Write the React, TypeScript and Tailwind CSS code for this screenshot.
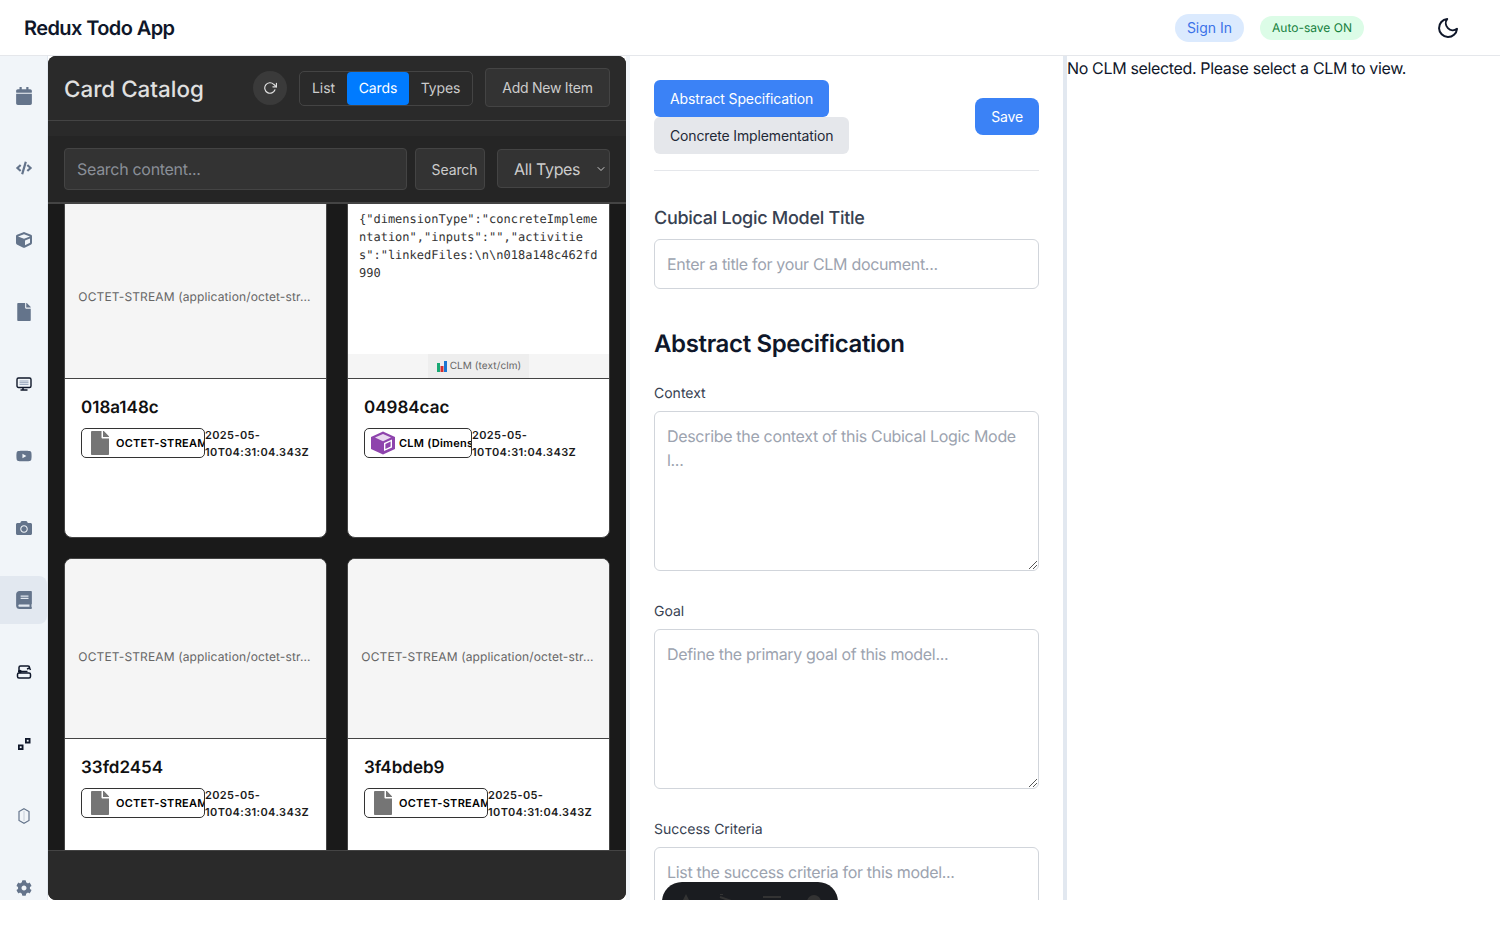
import React from "react";
import { FaCalendar, FaCode, FaCube, FaFile, FaCamera, FaBook, FaCog, FaYoutube } from "react-icons/fa";
import { FiMoon, FiRotateCw } from "react-icons/fi";
import { LuChevronDown } from "react-icons/lu";

const navIconClass = "text-[#64748b]";

function Monitor() {
  return (
    <svg width="16" height="16" viewBox="0 0 16 16">
      <rect x="1" y="2" width="14" height="9.5" rx="1.5" fill="none" stroke="#0f172a" strokeWidth="1.4" />
      <path d="M3.5 5h9M3.5 6.7h9M3.5 8.4h9" stroke="#94a3b8" strokeWidth="1" />
      <path d="M7 12v1.5M4.5 14h7" stroke="#0f172a" strokeWidth="1.5" />
    </svg>
  );
}
function Sync() {
  return (
    <svg width="16" height="16" viewBox="0 0 16 16" fill="none" stroke="#0f172a" strokeWidth="1.5">
      <path d="M3 7V3.5A1.5 1.5 0 0 1 4.5 2h7.5a1.5 1.5 0 0 1 1.5 1.5V4" />
      <path d="M2 7.5h9.5M11 5l2.5-1 1 2" />
      <rect x="1.5" y="9" width="13" height="5" rx="1.5" />
      <circle cx="4" cy="7.5" r="1" fill="#0f172a" />
    </svg>
  );
}
function Scatter() {
  return (
    <svg width="16" height="16" viewBox="0 0 16 16">
      <rect x="2" y="8.5" width="5.5" height="5.5" fill="#0f172a" />
      <rect x="3.8" y="10.3" width="1.8" height="1.8" fill="#f1f5f9" />
      <rect x="9" y="2" width="5.5" height="5.5" fill="#0f172a" />
      <rect x="10.8" y="3.8" width="1.8" height="1.8" fill="#f1f5f9" />
    </svg>
  );
}
function Hex() {
  return (
    <svg width="16" height="16" viewBox="0 0 16 16" fill="none" stroke="#64748b" strokeWidth="1.2">
      <path d="M8 .8 13 3.6v8.8L8 15.2 3 12.4V3.6z" />
      <path d="M8 3v10" strokeOpacity="0.25" />
    </svg>
  );
}

const nav: { icon: React.ReactNode; active?: boolean }[] = [
  { icon: <FaCalendar size={18} className={navIconClass} /> },
  { icon: <FaCode size={16} className={navIconClass} /> },
  { icon: <FaCube size={16} className={navIconClass} /> },
  { icon: <FaFile size={18} className={navIconClass} /> },
  { icon: <Monitor /> },
  { icon: <FaYoutube size={16} className={navIconClass} /> },
  { icon: <FaCamera size={16} className={navIconClass} /> },
  { icon: <FaBook size={18} className={navIconClass} />, active: true },
  { icon: <Sync /> },
  { icon: <Scatter /> },
  { icon: <Hex /> },
  { icon: <FaCog size={16} className={navIconClass} /> },
];

function PurpleCube() {
  return (
    <svg width="26" height="24" viewBox="0 0 26 24" className="shrink-0">
      <path d="M13 0.5 25 6v12l-12 5.5L1 18V6z" fill="#8e44ad" />
      <path d="M5 6.6 13 3l8 3.6-8 3.6z" fill="#e9d8f0" />
      <path d="M14 12v8l8-3.6V8.4z" fill="#fff" />
      <path d="M15.4 12.9v5l5.2-2.3v-5z" fill="#8e44ad" />
    </svg>
  );
}

function Chip({ icon, label, width, date, gap }: { icon: React.ReactNode; label: string; width: string; date: string; gap: string }) {
  return (
    <div className="flex items-start">
      <div className={`${width} ${gap} h-[30px] shrink-0 flex items-center pl-[5px] border border-[#333] rounded-[5px] overflow-hidden bg-white`}>
        {icon}
        <span className="text-[11px] pt-[1px] font-semibold tracking-[0.25px] text-black whitespace-nowrap">{label}</span>
      </div>
      <div className="text-[11px] font-semibold text-[#1a1a1a] leading-[17px] tracking-[0.38px] -mt-[1px]">{date}</div>
    </div>
  );
}

const GrayFile = () => (
  <span className="w-[24px] flex justify-center shrink-0 ml-[1px]">
    <FaFile size={24} className="text-[#757575]" />
  </span>
);

function Card({ title, preview, chip }: { title: string; preview: React.ReactNode; chip: React.ReactNode }) {
  return (
    <div className="w-[263px] h-[340px] shrink-0 bg-white border border-[#444] rounded-lg overflow-hidden flex flex-col">
      <div className="h-[180px] shrink-0 bg-[#f5f5f5] border-b border-[#444] relative overflow-hidden">{preview}</div>
      <div className="p-4 pt-[17px]">
        <div className="text-[17px] leading-[24px] font-semibold text-[#111] mb-[8px]">{title}</div>
        {chip}
      </div>
    </div>
  );
}

const OctetPreview = () => (
  <div className="h-full flex items-center justify-center pt-[16px] pr-[2px] text-[12px] tracking-[0.13px] text-[#666] whitespace-nowrap">
    OCTET-STREAM (application/octet-str...
  </div>
);

const ClmPreview = () => (
  <div className="h-full bg-white relative">
    <pre className="absolute left-[11px] top-[11px] text-[12px] leading-[18px] text-[#333] font-['DejaVu_Sans_Mono',monospace] whitespace-pre">
      {'{"dimensionType":"concreteImpleme\nntation","inputs":"","activitie\ns":"linkedFiles:\\n\\n018a148c462fd\n990'}
    </pre>
    <div className="absolute left-0 right-0 bottom-0 h-[24px] bg-[#f5f5f5] flex justify-center">
      <div className="h-[24px] bg-[#eeeeee] px-[8px] flex items-center gap-[2px] text-[10px] tracking-[0.1px] text-[#666]">
        <svg width="12" height="12" viewBox="0 0 12 12">
          <rect x="1" y="3" width="3" height="9" fill="#19a974" />
          <rect x="4.5" y="6" width="3" height="6" fill="#d32f2f" />
          <rect x="8" y="1" width="3" height="11" fill="#1976d2" />
        </svg>
        CLM (text/clm)
      </div>
    </div>
  </div>
);

export default function App() {
  return (
    <div className="w-[1500px] h-[940px] bg-white font-['Inter',sans-serif] overflow-hidden [text-rendering:geometricPrecision]">
      <header className="h-[56px] border-b border-[#e5e7eb] flex items-center pl-[24px] pr-[40px]">
        <h1 className="text-[20px] font-semibold text-[#0f172a] tracking-[-0.6px]">Redux Todo App</h1>
        <div className="ml-auto flex items-center">
          <button className="h-[28px] w-[69px] rounded-full bg-[#dbeafe] text-[14px] text-[#3b72e8]">Sign In</button>
          <div className="ml-[16px] h-[24px] w-[104px] rounded-full bg-[#dcfce7] text-[12px] text-[#15803d] flex items-center justify-center">Auto-save ON</div>
          <FiMoon size={24} className="ml-[72px] text-[#0f172a]" />
        </div>
      </header>

      <main className="flex h-[844px] overflow-hidden">
        <nav className="w-[48px] shrink-0 bg-[#f1f5f9] border-r border-[#e2e8f0] flex flex-col gap-[24px] pt-[16px]">
          {nav.map((n, i) => (
            <div key={i} className={`h-[48px] shrink-0 flex items-center justify-center rounded-r-lg ${n.active ? "bg-[#e2e8f0]" : ""}`}>
              {n.icon}
            </div>
          ))}
        </nav>

        <section className="w-[578px] shrink-0 bg-[#1a1a1a] rounded-lg overflow-hidden flex flex-col">
          <div className="h-[65px] shrink-0 bg-[#2a2a2a] border-b border-[#444] flex items-center px-[16px]">
            <h2 className="flex-1 text-[22.4px] pt-[4px] font-medium text-[#e0e0e0] whitespace-nowrap">Card Catalog</h2>
            <button className="w-[34px] h-[34px] rounded-full bg-[#3a3a3a] flex items-center justify-center text-[#e0e0e0]">
              <FiRotateCw size={14} />
            </button>
            <div className="ml-[12px] h-[35px] flex items-center border border-[#444] rounded-[5px] text-[14px] tracking-[-0.1px] text-[#ccc]">
              <span className="w-[47px] text-center">List</span>
              <span className="h-[33px] w-[62px] flex items-center justify-center bg-[#007bff] text-white rounded-[4px]">Cards</span>
              <span className="w-[63px] text-center">Types</span>
            </div>
            <button className="ml-[12px] mb-[1px] w-[125px] h-[39px] bg-[#333] border border-[#444] rounded-[4px] text-[14px] tracking-[-0.25px] text-[#ccc]">Add New Item</button>
          </div>
          <div className="h-[15px] shrink-0 bg-[#2a2a2a]" />
          <div className="h-[68px] shrink-0 bg-[#252525] border-b-[2px] border-[#444] flex items-center px-[16px] gap-[8px]">
            <div className="w-[343px] h-[42px] bg-[#333] border border-[#444] rounded-[4px] flex items-center px-[12px] text-[16px] tracking-[-0.3px] text-[#8a8f98]">Search content...</div>
            <button className="w-[70px] h-[42px] bg-[#333] border border-[#444] rounded-[4px] pl-[9px] text-[14px] tracking-[-0.1px] text-[#ccc]">Search</button>
            <div className="ml-[4px] mb-[1px] w-[113px] h-[39px] bg-[#333] border border-[#444] rounded-[4px] flex items-center justify-between pl-[16px] pr-[2px] text-[16px] tracking-[-0.33px] text-[#ccc]">
              All Types <LuChevronDown size={12} />
            </div>
          </div>
          <div className="flex-1 min-h-0 overflow-hidden px-[16px]">
            <div className="grid grid-cols-[263px_263px] gap-[20px] -mt-[6px]">
              <Card title="018a148c" preview={<OctetPreview />} chip={<Chip icon={<GrayFile />} gap="gap-[4px]" label="OCTET-STREAM" width="w-[124px]" date="2025-05-10T04:31:04.343Z" />} />
              <Card title="04984cac" preview={<ClmPreview />} chip={<Chip icon={<PurpleCube />} gap="gap-[3px]" label="CLM (Dimension)" width="w-[108px]" date="2025-05-10T04:31:04.343Z" />} />
              <Card title="33fd2454" preview={<OctetPreview />} chip={<Chip icon={<GrayFile />} gap="gap-[4px]" label="OCTET-STREAM" width="w-[124px]" date="2025-05-10T04:31:04.343Z" />} />
              <Card title="3f4bdeb9" preview={<OctetPreview />} chip={<Chip icon={<GrayFile />} gap="gap-[4px]" label="OCTET-STREAM" width="w-[124px]" date="2025-05-10T04:31:04.343Z" />} />
            </div>
          </div>
          <div className="h-[50px] shrink-0 bg-[#2a2a2a] border-t border-[#444]" />
        </section>

        <div className="w-[4px] shrink-0 bg-[#f1f5f9]" />

        <section className="w-[433px] shrink-0 px-[24px] pt-[24px] relative overflow-hidden">
          <div className="flex items-center justify-between pb-[16px] border-b border-[#e5e7eb]">
            <div className="flex flex-col items-start">
              <button className="h-[37px] px-[16px] rounded-md bg-[#3b82f6] text-white text-[14px] tracking-[-0.14px]">Abstract Specification</button>
              <button className="h-[37px] px-[16px] rounded-md bg-[#e5e7eb] text-[#1f2937] text-[14px] tracking-[-0.14px]">Concrete Implementation</button>
            </div>
            <button className="h-[37px] px-[16px] -translate-y-[1px] rounded-lg bg-[#3b82f6] text-white text-[14px] tracking-[-0.14px]">Save</button>
          </div>
          <h3 className="mt-[36px] text-[18px] leading-[24px] font-medium tracking-[-0.28px] text-[#374151]">Cubical Logic Model Title</h3>
          <div className="mt-[8px] h-[50px] border border-[#d1d5db] rounded-md flex items-center px-[12px] text-[16px] tracking-[-0.32px] text-[#9ca3af]">Enter a title for your CLM document...</div>
          <h2 className="mt-[39px] text-[24px] leading-[32px] font-semibold tracking-[-0.36px] text-[#0f172a]">Abstract Specification</h2>
          <label className="block mt-[24px] text-[14px] leading-[20px] text-[#374151]">Context</label>
          <div className="mt-[7px] h-[160px] border border-[#d1d5db] rounded-md px-[12px] py-[12px] text-[16px] leading-[24px] tracking-[-0.32px] text-[#9ca3af] relative">
            Describe the context of this Cubical Logic Mode<br />l...
            <Grip />
          </div>
          <label className="block mt-[31px] text-[14px] leading-[20px] text-[#374151]">Goal</label>
          <div className="mt-[7px] h-[160px] border border-[#d1d5db] rounded-md px-[12px] py-[12px] text-[16px] leading-[24px] tracking-[-0.32px] text-[#9ca3af] relative">
            Define the primary goal of this model...
            <Grip />
          </div>
          <label className="block mt-[31px] text-[14px] leading-[20px] text-[#374151]">Success Criteria</label>
          <div className="mt-[7px] h-[160px] border border-[#d1d5db] rounded-md px-[12px] py-[12px] text-[16px] leading-[24px] tracking-[-0.32px] text-[#9ca3af]">
            List the success criteria for this model...
          </div>
          <div className="absolute left-[32px] top-[826px] w-[176px] h-[40px] rounded-[20px] bg-[#1a1c20] flex items-center gap-[24px] pl-[16px]">
            <svg width="16" height="16" viewBox="0 0 16 16" fill="#333"><path d="M8 0l3 6 2 10H3L5 6z" /></svg>
            <svg width="20" height="16" viewBox="0 0 20 16" stroke="#333" fill="none" strokeWidth="2"><path d="M2 3l14 5M2 0h3" /></svg>
            <svg width="20" height="16" viewBox="0 0 20 16" stroke="#333" strokeWidth="2"><path d="M1 3h18" /></svg>
            <svg width="16" height="16" viewBox="0 0 16 16" fill="#333"><circle cx="8" cy="8" r="7" /></svg>
          </div>
        </section>

        <div className="w-[4px] shrink-0 bg-[#e2e8f0]" />

        <section className="flex-1 text-[16px] leading-[24px] tracking-[-0.35px] text-[#0f172a]">No CLM selected. Please select a CLM to view.</section>
      </main>
    </div>
  );
}

function Grip() {
  return (
    <svg className="absolute right-[1px] bottom-[1px]" width="9" height="9" viewBox="0 0 9 9" stroke="#555" strokeWidth="1">
      <path d="M1 9 9 1M5 9l4-4" />
    </svg>
  );
}
